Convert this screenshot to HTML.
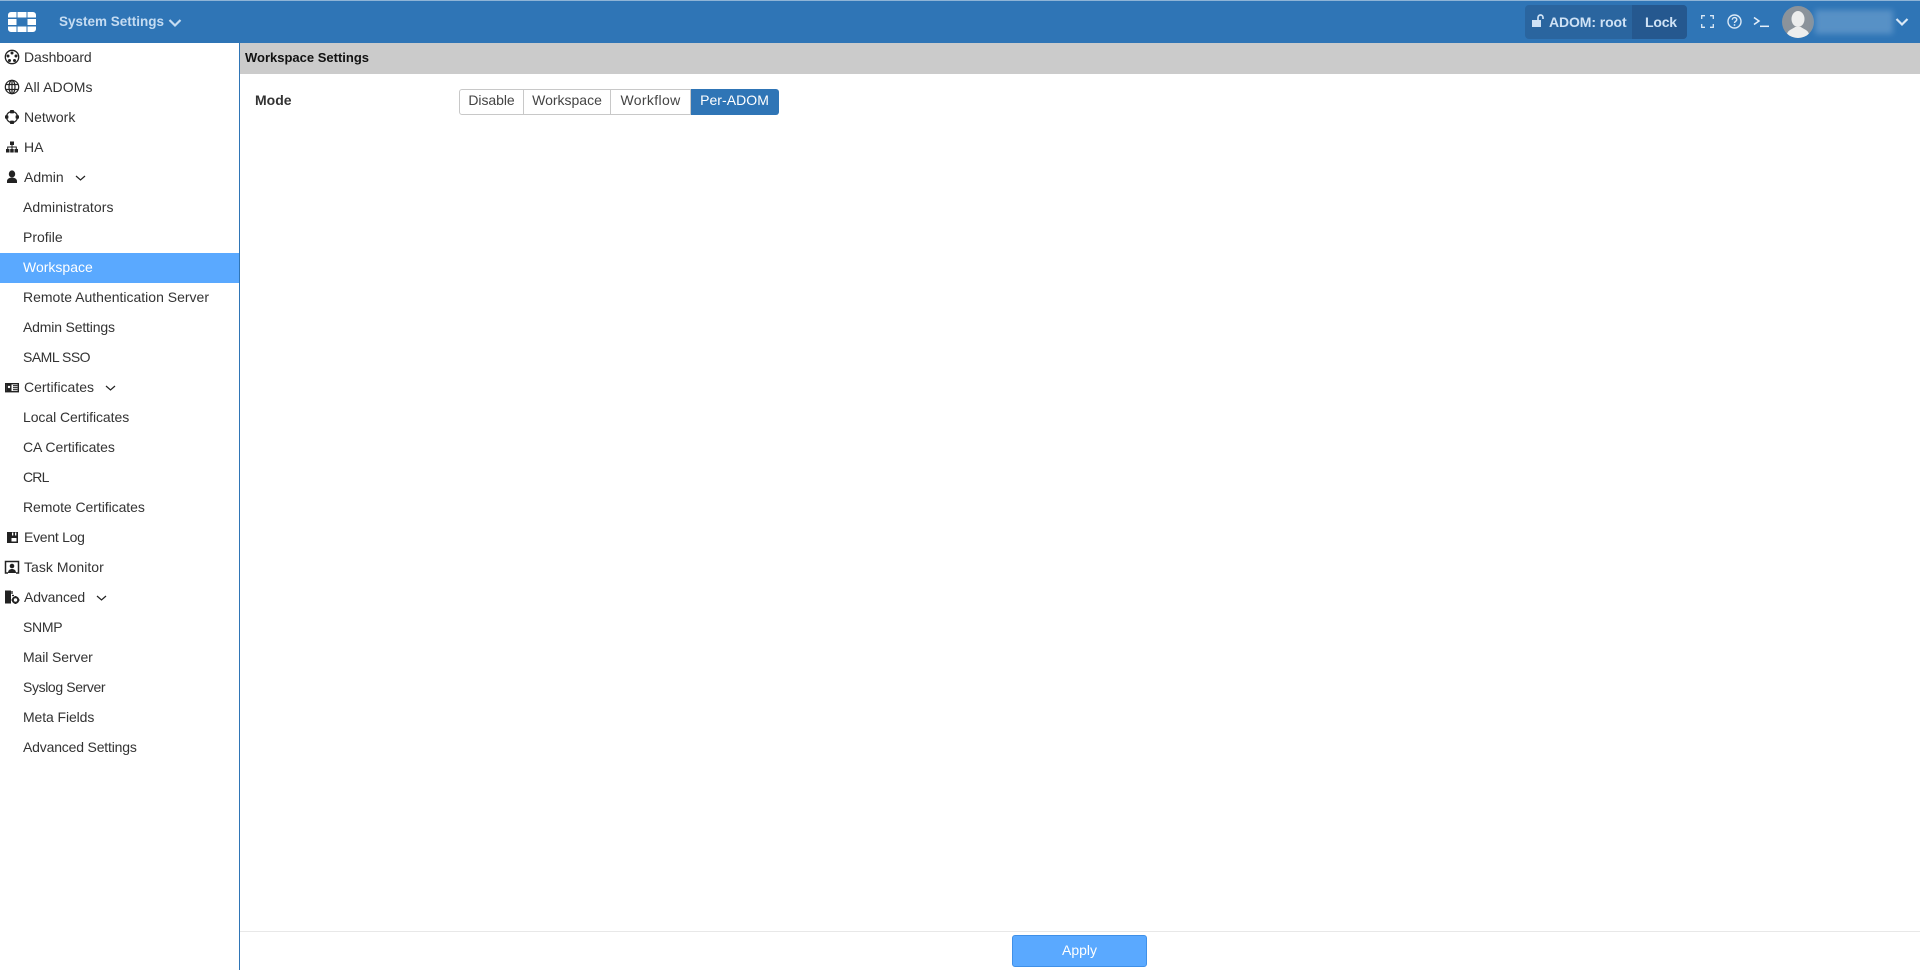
<!DOCTYPE html>
<html><head><meta charset="utf-8"><title>Workspace Settings</title>
<style>
html,body{margin:0;padding:0;width:1920px;height:970px;overflow:hidden;background:#fff;font-family:"Liberation Sans",sans-serif;font-size:14px;color:#333}
.a{position:absolute}
#top{left:0;top:0;width:1920px;height:43px;background:#2f75b6;border-top:1px solid #8fb4d6;box-sizing:border-box}
#side{left:0;top:43px;width:239px;height:927px;background:#fff;border-right:1px solid #2f75b6}
.r{position:absolute;left:0;width:239px;height:30px;line-height:28px;white-space:nowrap}
.r.i{padding-left:24px;width:215px}
.r.s{padding-left:23px;width:216px}
.r.sel{background:#5aa9ff;color:#fff}
.r svg.ic{position:absolute;left:4px;top:6px;width:16px;height:16px}
.chev{display:inline-block;margin-left:11px}
#title{left:240px;top:43px;width:1680px;height:31px;background:#cbcbcb;color:#111;font-weight:bold;line-height:29px;font-size:13px;text-indent:5px}
.seg{position:absolute;top:89px;height:26px;box-sizing:border-box;border:1px solid #c8c8c8;border-left:0;line-height:21px;text-align:center;background:#fff;color:#444}
</style></head><body>
<div class="a" id="top"></div>
<svg class="a" style="left:8px;top:12px" width="28" height="20" viewBox="0 0 28 20"><g fill="#fff"><path d="M3 0h5.500v5.500H0V3a3 3 0 0 1 3-3zM9.500 0h9v5.500h-9zM19.500 0H25a3 3 0 0 1 3 3v2.500h-8.500zM0 7h8.500v6H0zM19.500 7H28v6h-8.500zM0 14.500h8.500V20H3a3 3 0 0 1-3-3zM9.500 14.500h9V20h-9zM19.500 14.500H28V17a3 3 0 0 1-3 3h-5.500z"/></g></svg>
<div class="a" style="left:59px;top:13px;color:#c5dcf2;font-weight:bold;font-size:13.500px;white-space:nowrap;line-height:18px">System Settings</div>
<svg class="a" style="left:168px;top:18px" width="14" height="10" viewBox="0 0 14 10"><path d="M1.500 2l5.500 5.500L12.500 2" fill="none" stroke="#c5dcf2" stroke-width="2.200"/></svg>

<div class="a" style="left:1525px;top:5px;width:162px;height:34px;background:#2a659f;border-radius:4px"></div>
<div class="a" style="left:1632px;top:5px;width:55px;height:34px;background:#25588f;border-radius:0 4px 4px 0"></div>
<svg class="a" style="left:1532px;top:14px" width="14" height="14" viewBox="0 0 14 14"><path d="M0 6h9v7H0z" fill="#cfe2f5"/><path d="M6 6V3.500a2.500 2.500 0 0 1 5 0V5" fill="none" stroke="#cfe2f5" stroke-width="1.700"/></svg>
<div class="a" style="left:1549px;top:13px;color:#cfe2f5;font-weight:bold;font-size:14px;line-height:18px;white-space:nowrap;letter-spacing:-.1px">ADOM: root</div>
<div class="a" style="left:1645px;top:13px;color:#cfe2f5;font-weight:bold;font-size:14px;line-height:18px;letter-spacing:-.2px">Lock</div>
<svg class="a" style="left:1701px;top:15px" width="13" height="13" viewBox="0 0 13 13"><path d="M.7 4V.7H4M9 .7h3.300V4M12.300 9v3.300H9M4 12.300H.7V9" fill="none" stroke="#dbe9f6" stroke-width="1.300"/></svg>
<svg class="a" style="left:1727px;top:14px" width="15" height="15" viewBox="0 0 15 15"><circle cx="7.500" cy="7.500" r="6.500" fill="none" stroke="#dbe9f6" stroke-width="1.400"/><path d="M5.300 5.800c0-3 4.500-3 4.500-.2 0 1.700-2.300 1.700-2.300 3.400" fill="none" stroke="#dbe9f6" stroke-width="1.400"/><circle cx="7.500" cy="11" r=".9" fill="#dbe9f6"/></svg>
<svg class="a" style="left:1753px;top:16px" width="17" height="12" viewBox="0 0 17 12"><path d="M1 1.500L6 5 1 8.500" fill="none" stroke="#e6f0fa" stroke-width="1.500"/><path d="M7 10.300h9" stroke="#e6f0fa" stroke-width="1.500"/></svg>
<svg class="a" style="left:1782px;top:6px" width="32" height="32" viewBox="0 0 32 32"><defs><clipPath id="c"><circle cx="16" cy="16" r="16"/></clipPath></defs><circle cx="16" cy="16" r="16" fill="#8b939b"/><g clip-path="url(#c)" fill="#eceded"><ellipse cx="16" cy="13" rx="6.500" ry="8"/><path d="M5 29c0-5 6-6 8-8h6c2 2 8 3 8 8v3H5z"/></g></svg>
<div class="a" style="left:1815px;top:10px;width:78px;height:24px;background:#6298ca;filter:blur(3px);opacity:.8"></div>
<svg class="a" style="left:1895px;top:17px" width="14" height="10" viewBox="0 0 14 10"><path d="M1.500 2l5.500 5.500L12.500 2" fill="none" stroke="#dbe9f6" stroke-width="2.200"/></svg>

<div class="a" id="side"></div>

<div class="r i" style="top:43px;letter-spacing:-.1px"><svg class="ic" viewBox="0 0 16 16"><circle cx="8" cy="8" r="6.700" fill="none" stroke="#222" stroke-width="1.300"/><g fill="#222"><circle cx="8" cy="4" r="1.500"/><circle cx="4" cy="7" r="1.500"/><circle cx="12" cy="7" r="1.500"/><circle cx="5.500" cy="11.500" r="1.500"/><circle cx="10.500" cy="11.500" r="1.500"/></g></svg>Dashboard</div>
<div class="r i" style="top:73px;letter-spacing:.1px"><svg class="ic" viewBox="0 0 16 16"><g fill="none" stroke="#222" stroke-width="1.200"><circle cx="8" cy="8" r="6.700"/><ellipse cx="8" cy="8" rx="3" ry="6.700"/><path d="M1.500 5.500h13M1.500 10.500h13M8 1v14"/></g></svg>All ADOMs</div>
<div class="r i" style="top:103px"><svg class="ic" viewBox="0 0 16 16"><circle cx="8" cy="8" r="5.500" fill="none" stroke="#222" stroke-width="1.200"/><g fill="#222"><rect x="6" y="1" width="4" height="3.400" rx=".8"/><rect x="6" y="11.600" width="4" height="3.400" rx=".8"/><rect x="1" y="6.300" width="3.400" height="3.400" rx=".8"/><rect x="11.600" y="6.300" width="3.400" height="3.400" rx=".8"/></g></svg>Network</div>
<div class="r i" style="top:133px"><svg class="ic" viewBox="0 0 16 16"><g fill="#222"><rect x="6" y="2.500" width="4" height="3.500"/><rect x="2" y="10" width="3.500" height="3.500"/><rect x="6.200" y="10" width="3.500" height="3.500"/><rect x="10.500" y="10" width="3.500" height="3.500"/></g><path d="M8 6v4M3.700 10V8h8.600v2" fill="none" stroke="#222" stroke-width="1"/></svg>HA</div>
<div class="r i" style="top:163px"><svg class="ic" viewBox="0 0 16 16"><g fill="#222"><ellipse cx="8" cy="5" rx="3.200" ry="3.600"/><path d="M3 14v-2c0-2 2-3 3.500-3.300h3C11 9 13 10 13 12v2z"/></g></svg>Admin<svg class="chev" width="11" height="7" viewBox="0 0 11 7"><path d="M1 1l4.500 4L10 1" fill="none" stroke="#222" stroke-width="1.200"/></svg></div>
<div class="r s" style="top:193px;letter-spacing:.08px">Administrators</div>
<div class="r s" style="top:223px">Profile</div>
<div class="r s sel" style="top:253px">Workspace</div>
<div class="r s" style="top:283px">Remote Authentication Server</div>
<div class="r s" style="top:313px;letter-spacing:-.17px">Admin Settings</div>
<div class="r s" style="top:343px;letter-spacing:-.5px">SAML SSO</div>
<div class="r i" style="top:373px"><svg class="ic" viewBox="0 0 16 16"><rect x="1.700" y="4.700" width="12.600" height="8" fill="none" stroke="#222" stroke-width="1.400"/><rect x="2.500" y="5" width="5" height="7" fill="#222"/><circle cx="5" cy="8" r="1.200" fill="#fff"/><path d="M9 6.700h4.500M9 8.700h4.500M9 10.700h4.500" stroke="#222" stroke-width="1.100"/></svg>Certificates<svg class="chev" width="11" height="7" viewBox="0 0 11 7"><path d="M1 1l4.500 4L10 1" fill="none" stroke="#222" stroke-width="1.200"/></svg></div>
<div class="r s" style="top:403px;letter-spacing:-.07px">Local Certificates</div>
<div class="r s" style="top:433px;letter-spacing:-.05px">CA Certificates</div>
<div class="r s" style="top:463px;letter-spacing:-.8px">CRL</div>
<div class="r s" style="top:493px;letter-spacing:-.06px">Remote Certificates</div>
<div class="r i" style="top:523px;letter-spacing:-.27px"><svg class="ic" viewBox="0 0 16 16"><path d="M3 3h11v11H3z" fill="#222"/><path d="M8 3.500h1.300v3H8zM11 3.500h1.300v3H11zM7.500 9h5v3.500h-5z" fill="#fff"/></svg>Event Log</div>
<div class="r i" style="top:553px;letter-spacing:.04px"><svg class="ic" viewBox="0 0 16 16"><path d="M4 14H1.500V2.500h13V14H12" fill="none" stroke="#222" stroke-width="1.500"/><circle cx="8" cy="7" r="2.300" fill="#222"/><path d="M4 14c0-3 2-4 4-4s4 1 4 4z" fill="#222"/></svg>Task Monitor</div>
<div class="r i" style="top:583px;letter-spacing:-.15px"><svg class="ic" viewBox="0 0 16 16"><path d="M1 1.500h6v13H1z" fill="#222"/><path d="M8 2v3M8 6.500h2" stroke="#222" stroke-width="1.300"/><circle cx="11.500" cy="11" r="2.700" fill="none" stroke="#222" stroke-width="2"/><path d="M11.500 7v1.500M11.500 13.500V15M7.500 11H9M14 11h1.500" stroke="#222" stroke-width="1.500"/></svg>Advanced<svg class="chev" width="11" height="7" viewBox="0 0 11 7"><path d="M1 1l4.500 4L10 1" fill="none" stroke="#222" stroke-width="1.200"/></svg></div>
<div class="r s" style="top:613px;letter-spacing:-.3px">SNMP</div>
<div class="r s" style="top:643px;letter-spacing:-.1px">Mail Server</div>
<div class="r s" style="top:673px;letter-spacing:-.38px">Syslog Server</div>
<div class="r s" style="top:703px;letter-spacing:-.1px">Meta Fields</div>
<div class="r s" style="top:733px;letter-spacing:-.18px">Advanced Settings</div>

<div class="a" id="title">Workspace Settings</div>
<div class="a" style="left:255px;top:91px;font-weight:bold;color:#333;font-size:14px;line-height:18px">Mode</div>
<div class="seg" style="left:459px;width:65px;border-left:1px solid #c8c8c8;border-radius:3px 0 0 3px;letter-spacing:-.05px">Disable</div>
<div class="seg" style="left:524px;width:87px">Workspace</div>
<div class="seg" style="left:611px;width:80px;letter-spacing:.35px">Workflow</div>
<div class="seg" style="left:691px;width:88px;background:#2f75b6;border-color:#2f75b6;color:#fff;border-radius:0 3px 3px 0;letter-spacing:.05px">Per-ADOM</div>

<div class="a" style="left:240px;top:931px;width:1680px;height:1px;background:#e8e8e8"></div>
<div class="a" style="left:1012px;top:935px;width:135px;height:32px;box-sizing:border-box;background:#5aa9ff;border:1px solid #3f90e8;border-radius:3px;color:#fff;text-align:center;line-height:29px">Apply</div>
</body></html>
